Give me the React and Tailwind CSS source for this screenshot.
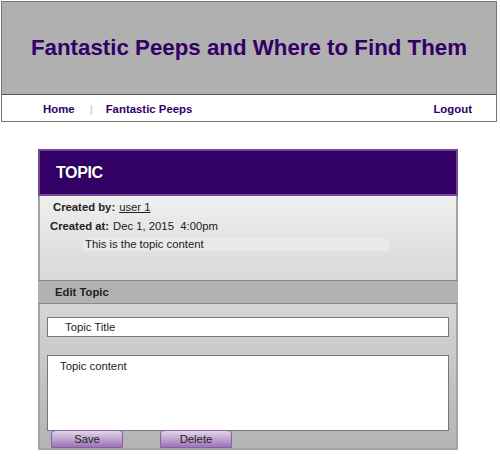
const font = { fontFamily: '"Liberation Sans", Arial, sans-serif' };

const Header = () => (
  <div className="ml-[1px] mt-[1px] w-[496px] border border-[#777]">
    <div className="flex h-[93px] items-center justify-center border-b border-[#555] bg-[#b0b0b0]">
      <h1 className="text-[22.3px] font-bold leading-none text-[#330066]">Fantastic Peeps and Where to Find Them</h1>
    </div>
    <nav className="flex h-[26px] items-center pl-[41px] pr-[24px] pt-[3px] text-[11.4px] font-bold text-[#330066]">
      <a>Home</a>
      <span className="ml-[15px] mr-[13px] font-normal text-[#9fd6cf]">|</span>
      <a>Fantastic Peeps</a>
      <a className="ml-auto">Logout</a>
    </nav>
  </div>
);

const TopicCard = () => (
  <div className="ml-[38px] mt-[27px] w-[420px]">
    <div className="flex h-[47px] items-center border-2 border-[#6f4a99] bg-[#330066] pl-[16px]">
      <span className="text-[16px] font-bold tracking-tight text-white [text-shadow:0_0_1px_#000]">TOPIC</span>
    </div>
    <div className="h-[84px] border-x-2 border-[#a3a3a3] bg-gradient-to-b from-[#efefef] to-[#d8d8d8] pt-[2px] text-[11.3px] text-[#222]">
      <div className="ml-[13px] flex h-[19px] items-center">
        <b>Created by:</b>
        <span className="ml-[4px] underline">user 1</span>
      </div>
      <div className="ml-[10px] flex h-[19px] items-center">
        <b>Created at:</b>
        <span className="ml-[4px] whitespace-pre">Dec 1, 2015  4:00pm</span>
      </div>
      <div className="ml-[43px] mt-[2px] flex h-[13px] w-[306px] items-center bg-[#e9e9e9] pl-[2px]">This is the topic content</div>
    </div>
    <div className="flex h-[24px] items-center border-y border-[#8a8a8a] bg-[#b1b1b1] pl-[17px] text-[11.3px] font-bold text-[#222]">Edit Topic</div>
    <div className="border-x-2 border-b-2 border-[#a3a3a3] bg-gradient-to-b from-[#d6d6d6] to-[#b3b3b3] pt-[13px] text-[11.3px] text-[#222]">
      <div className="ml-[7px] flex h-[20px] w-[402px] items-center border border-[#777] bg-white pl-[17px]">Topic Title</div>
      <div className="ml-[7px] mt-[18px] h-[76px] w-[402px] border border-[#777] bg-white pl-[12px] pt-[2px]">Topic content</div>
      <div className="-mt-[1px] ml-[11px] flex gap-[37px]">
        <button className="h-[18px] w-[72px] rounded-t-[4px] border border-[#8b5ea6] bg-gradient-to-b from-[#e3d6ea] to-[#9c74b6] text-[11.3px] text-[#222]">Save</button>
        <button className="h-[18px] w-[72px] rounded-t-[4px] border border-[#8b5ea6] bg-gradient-to-b from-[#e3d6ea] to-[#9c74b6] text-[11.3px] text-[#222]">Delete</button>
      </div>
    </div>
  </div>
);

export default function App() {
  return (
    <div className="h-[465px] w-[500px] overflow-hidden bg-white" style={font}>
      <Header />
      <TopicCard />
    </div>
  );
}
